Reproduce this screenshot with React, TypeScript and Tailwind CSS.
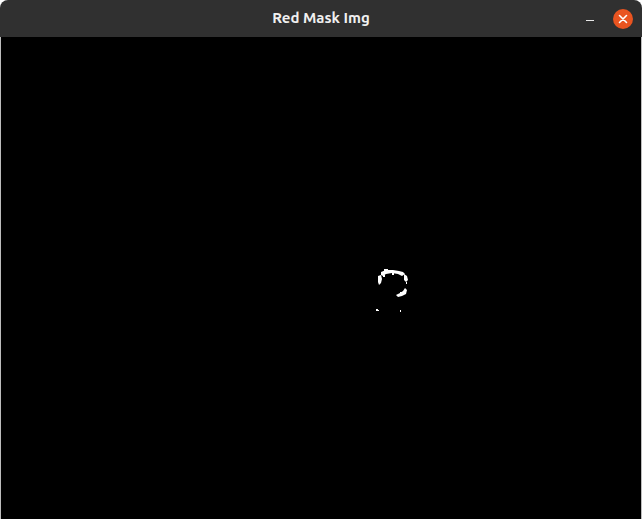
import React from 'react';

const Blob = () => (
  <svg width="642" height="482" viewBox="0 37 642 482" className="block">
    <g fill="#fff">
      {/* top arc */}
      <polygon points="381,272 386,270 393,270 399,271 403,272 405,274 402,276 398,274 392,273 386,274 383,276 381,275" />
      <rect x="384" y="269" width="4" height="2" />
      <rect x="392" y="271" width="2" height="4" />
      {/* left side going down */}
      <polygon points="378,276 381,275 382,279 381,283 379,285 378,282" />
      <rect x="383" y="275" width="2" height="2" />
      {/* right end */}
      <polygon points="404,274 407,276 408,280 406,282 404,280 404,277" />
      <rect x="406" y="282" width="1" height="2" />
      {/* hook */}
      <polygon points="405,288 407,290 406,294 402,296 398,297 396,295 400,293 403,291" />
      <rect x="400" y="292" width="3" height="2" />
      {/* specks */}
      <rect x="376" y="309" width="2" height="2" />
      <rect x="378" y="310" width="1" height="1" />
      <rect x="400" y="310" width="1" height="2" />
    </g>
  </svg>
);

export default function App() {
  return (
    <div className="w-[642px] h-[519px] bg-white overflow-hidden">
      <div className="flex h-full flex-col">
        <div
          className="relative flex h-[37px] shrink-0 items-center justify-center rounded-t-[8px] bg-[#303030]"
          style={{ fontFamily: '"Ubuntu", "DejaVu Sans", "Liberation Sans", sans-serif' }}
        >
          <span className="text-[15px] font-bold text-[#f0f0f0]">Red Mask Img</span>
          <div className="absolute right-[9px] top-[9px] flex items-center gap-[19px]">
            <div className="mt-[3px] h-[1px] w-[8px] bg-[#e8e8e8]" />
            <div className="flex h-[20px] w-[20px] items-center justify-center rounded-full bg-[#e95420]">
              <svg width="10" height="10" viewBox="0 0 10 10">
                <path d="M1.5 1.5 L8.5 8.5 M8.5 1.5 L1.5 8.5" stroke="#fff" strokeWidth="1.6" strokeLinecap="round" />
              </svg>
            </div>
          </div>
        </div>
        <div className="flex-1 border-x border-b border-[#bdbdbd] bg-black">
          <div className="-ml-px">
            <Blob />
          </div>
        </div>
      </div>
    </div>
  );
}
